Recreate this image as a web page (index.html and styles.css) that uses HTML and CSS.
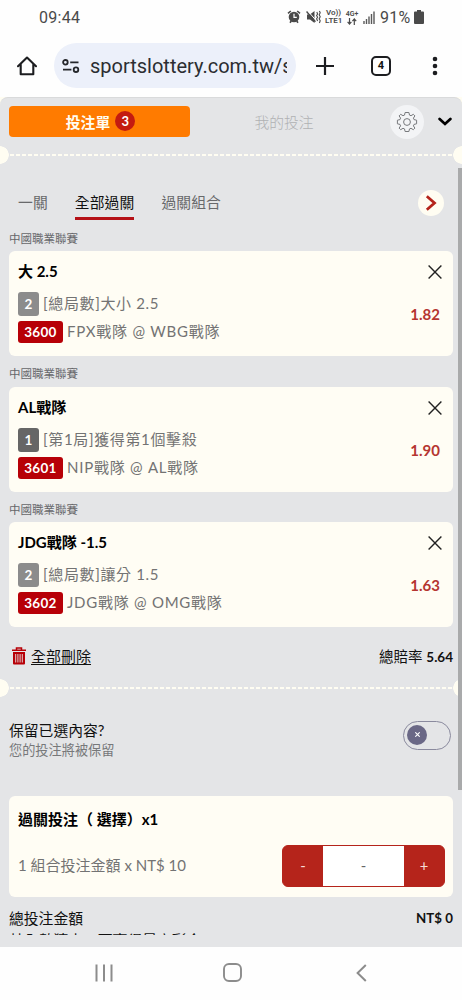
FILE: index.html
```html
<!DOCTYPE html>
<html lang="zh-Hant">
<head>
  <meta charset="UTF-8" />
  <meta name="viewport" content="width=device-width, initial-scale=1.0" />
  <title>投注單</title>
  <link rel="stylesheet" href="styles.css">
</head>
<body>
  <div class="phone">
    <!-- Status bar -->
    <div class="status">
      <span class="clock">09:44</span>
      <div class="status-icons">
        <svg class="alarm" width="14" height="14" viewBox="0 0 14 14">
          <path d="M1 3.4 3.8 1M13 3.4 10.2 1M3 12.8 4.3 11M11 12.8 9.7 11" stroke="#4a4a4a" stroke-width="1.6" fill="none"/>
          <circle cx="7" cy="7" r="5.3" fill="#4a4a4a"/>
          <path d="M7 3.8V7.3H9.8" stroke="#fff" stroke-width="1.2" fill="none"/>
        </svg>
        <svg class="mute" width="15" height="14" viewBox="0 0 15 14">
          <path d="M1 4.5H4L8.5 1V13L4 9.5H1Z" fill="#4a4a4a"/>
          <path d="M.6 1.6 9.4 11.8" stroke="#4a4a4a" stroke-width="1.5"/>
          <path d="M2.2 1.4 9.6 9.9" stroke="#fff" stroke-width="1"/>
          <path d="M10.8 2 11.6 4 10.6 5.6 11.6 7.2 10.6 8.8 11.6 11M13.4 1 14.2 2.8 13.2 4.8 14.2 6.8 13.2 8.8 14.2 10.8 13.4 13" stroke="#4a4a4a" stroke-width="1.1" fill="none"/>
        </svg>
        <span class="net volte">Vo))<br>LTE1</span>
        <span class="net lte">4G+<br><svg width="10" height="7" viewBox="0 0 10 7"><path d="M2.5 0V5.8M.6 3.8 2.5 6 4.4 3.8M7.3 7V1M5.4 3.1 7.3 1 9.2 3.1" stroke="#4a4a4a" stroke-width="1.2" fill="none"/></svg></span>
        <svg class="signal" width="12" height="13" viewBox="0 0 12 13">
          <path d="M1 10V13M3.5 8V13M6 5.5V13M8.5 3V13M11 .5V13" stroke="#5a5a5a" stroke-width="1.4"/>
        </svg>
        <span class="percent">91%</span>
        <svg class="battery" width="10" height="14" viewBox="0 0 10 14">
          <path d="M3 0H7V1.5H9Q10 1.5 10 2.5V13Q10 14 9 14H1Q0 14 0 13V2.5Q0 1.5 1 1.5H3Z" fill="#4a4a4a"/>
        </svg>
      </div>
    </div>

    <!-- Browser toolbar -->
    <div class="toolbar">
      <svg class="home" width="20" height="20" viewBox="0 0 20 20">
        <path d="M1 10.2 10 1.6 19 10.2M3.7 8.3V18.3H16.3V8.3" fill="none" stroke="#1c1d20" stroke-width="2.1" stroke-linejoin="round" stroke-linecap="round"/>
      </svg>
      <div class="url-bar">
        <svg width="18" height="14" viewBox="0 0 18 14">
          <g fill="none" stroke="#25272b" stroke-width="1.8">
            <circle cx="3.4" cy="3.3" r="2.3"/>
            <path d="M8.2 3.3H16.5M1 10.7H9.4"/>
            <circle cx="14" cy="10.7" r="2.3"/>
          </g>
        </svg>
        <span class="url">sportslottery.com.tw/s</span>
      </div>
      <svg class="plus" width="18" height="18" viewBox="0 0 18 18">
        <path d="M9 0V18M0 9H18" stroke="#1c1d20" stroke-width="2.2"/>
      </svg>
      <span class="tab-count">4</span>
      <svg class="dots" width="6" height="20" viewBox="0 0 6 20">
        <circle cx="3" cy="3" r="2.3"/><circle cx="3" cy="10" r="2.3"/><circle cx="3" cy="17" r="2.3"/>
      </svg>
    </div>

    <!-- Bet slip -->
    <div class="sheet-wrap">
      <div class="sheet">
        <div class="sheet-head">
          <div class="slip-tab">投注單<span class="badge">3</span></div>
          <div class="my-bets">我的投注</div>
          <div class="gear">
            <svg width="22" height="22" viewBox="-11 -11 22 22">
              <path d="M-1.9-9.5H1.9L2.5-6.9 4-6.3 6.3-7.7 7.9-6.1 6.4-3.9 7-2.4 9.6-1.8V1.8L7 2.4 6.4 3.9 7.9 6.1 6.3 7.7 4 6.3 2.5 6.9 1.9 9.5H-1.9L-2.5 6.9-4 6.3-6.3 7.7-7.9 6.1-6.4 3.9-7 2.4-9.6 1.8V-1.8L-7-2.4-6.4-3.9-7.9-6.1-6.3-7.7-4-6.3-2.5-6.9Z" fill="none" stroke="#77797c" stroke-linejoin="round"/>
              <circle r="3.4" fill="none" stroke="#77797c"/>
            </svg>
          </div>
          <svg class="chevron" width="14" height="10" viewBox="0 0 14 10">
            <path d="M1.6 2 7 7 12.4 2" fill="none" stroke="#000" stroke-width="2.7" stroke-linecap="round"/>
          </svg>
        </div>

        <div class="tear"></div>

        <div class="type-tabs">
          <span class="type">一關</span>
          <span class="type active">全部過關</span>
          <span class="type">過關組合</span>
          <div class="next">
            <svg width="12" height="16" viewBox="0 0 12 16">
              <path d="M1.8 1.3 9.5 8 1.8 14.7" fill="none" stroke="#b5241b" stroke-width="2.8"/>
            </svg>
          </div>
        </div>

        <div class="league">中國職業聯賽</div>
        <div class="bet">
          <div class="bet-info">
            <div class="pick">大 2.5</div>
            <div class="line"><span class="num">2</span><span>[總局數]大小 2.5</span></div>
            <div class="line teams"><span class="code">3600</span><span>FPX戰隊 @ WBG戰隊</span></div>
          </div>
          <div class="bet-side">
            <svg width="14" height="14" viewBox="0 0 14 14"><path d="M.6.6 13.4 13.4M13.4.6.6 13.4" stroke="#222" stroke-width="1.4"/></svg>
            <span class="odds">1.82</span>
          </div>
        </div>

        <div class="league">中國職業聯賽</div>
        <div class="bet">
          <div class="bet-info">
            <div class="pick">AL戰隊</div>
            <div class="line"><span class="num dark">1</span><span>[第1局]獲得第1個擊殺</span></div>
            <div class="line teams"><span class="code">3601</span><span>NIP戰隊 @ AL戰隊</span></div>
          </div>
          <div class="bet-side">
            <svg width="14" height="14" viewBox="0 0 14 14"><path d="M.6.6 13.4 13.4M13.4.6.6 13.4" stroke="#222" stroke-width="1.4"/></svg>
            <span class="odds">1.90</span>
          </div>
        </div>

        <div class="league">中國職業聯賽</div>
        <div class="bet">
          <div class="bet-info">
            <div class="pick">JDG戰隊 -1.5</div>
            <div class="line"><span class="num">2</span><span>[總局數]讓分 1.5</span></div>
            <div class="line teams"><span class="code">3602</span><span>JDG戰隊 @ OMG戰隊</span></div>
          </div>
          <div class="bet-side">
            <svg width="14" height="14" viewBox="0 0 14 14"><path d="M.6.6 13.4 13.4M13.4.6.6 13.4" stroke="#222" stroke-width="1.4"/></svg>
            <span class="odds">1.63</span>
          </div>
        </div>

        <div class="summary">
          <svg width="14" height="18" viewBox="0 0 14 18">
            <path d="M0 3.3H14M4.5 3V1H9.5V3" fill="none" stroke="#b70007" stroke-width="1.5"/>
            <path d="M1 5H13V16.5Q13 17.5 12 17.5H2Q1 17.5 1 16.5Z" fill="#b70007"/>
            <path d="M3.7 7V15.5M5.9 7V15.5M8.1 7V15.5M10.3 7V15.5" stroke="#e4e5e7" stroke-width=".9"/>
          </svg>
          <span class="clear">全部刪除</span>
          <span class="total-odds">總賠率 <b>5.64</b></span>
        </div>

        <div class="tear"></div>

        <div class="keep">
          <div>
            <div class="keep-title">保留已選內容?</div>
            <div class="keep-note">您的投注將被保留</div>
          </div>
          <div class="toggle">
            <span class="knob"><svg width="5" height="5" viewBox="0 0 5 5"><path d="M.3.3 4.7 4.7M4.7.3.3 4.7" stroke="#fff" stroke-width="1.1"/></svg></span>
          </div>
        </div>

        <div class="stake">
          <div class="stake-title">過關投注（ 選擇）x1</div>
          <div class="stake-row">
            <span class="stake-label">1 組合投注金額 x NT$ 10</span>
            <div class="stepper">
              <span class="step">-</span>
              <span class="amount">-</span>
              <span class="step">+</span>
            </div>
          </div>
        </div>

        <div class="total"><span>總投注金額</span><b>NT$ 0</b></div>
        <div class="cut">若全數猜中，可贏得最高彩金</div>

        <div class="scrollbar"></div>
      </div>
    </div>

    <!-- Android navigation -->
    <div class="nav">
      <svg width="18" height="18" viewBox="0 0 18 18"><path d="M1.5.5V17.5M9 .5V17.5M16.5.5V17.5" stroke="#8c8c8c" stroke-width="2"/></svg>
      <svg class="nav-home" width="19" height="19" viewBox="0 0 19 19"><rect x="1" y="1" width="17" height="17" rx="5" fill="none" stroke="#8c8c8c" stroke-width="1.9"/></svg>
      <svg width="11" height="18" viewBox="0 0 11 18"><path d="M9.8 1 1.6 9 9.8 17" fill="none" stroke="#8c8c8c" stroke-width="2"/></svg>
    </div>
  </div>
</body>
</html>
```
FILE: styles.css
```css
* {
  box-sizing: border-box;
}

body {
  margin: 0;
  background: #fefefe;
  color: #111;
  font-family: Lato, "Noto Sans CJK TC", sans-serif;
  font-size: 14.8px;
}

svg {
  display: block;
  flex: none;
}

.phone {
  width: 462px;
  height: 1000px;
  display: flex;
  flex-direction: column;
  overflow: hidden;
}

/* status bar */
.status {
  height: 34px;
  padding: 0 38px 0 39px;
  display: flex;
  align-items: center;
  justify-content: space-between;
  font-family: Roboto, sans-serif;
  color: #4a4a4a;
}

.clock {
  font-size: 16px;
  letter-spacing: 0.3px;
}

.status-icons {
  display: flex;
  align-items: center;
}

.mute {
  margin-left: 5px;
}

.net {
  font-size: 8px;
  line-height: 8px;
  font-weight: 600;
  text-align: center;
}

.net svg {
  margin: 0 auto;
}

.volte {
  width: 17px;
  margin-left: 4px;
}

.lte {
  width: 14px;
  margin-left: 3px;
  font-size: 7px;
}

.signal {
  margin-left: 4px;
}

.percent {
  margin-left: 5px;
  width: 34px;
  font-size: 16px;
  letter-spacing: 0.2px;
  white-space: nowrap;
}

/* browser toolbar */
.toolbar {
  height: 63px;
  padding: 0 24px 0 17px;
  display: flex;
  align-items: center;
}

.url-bar {
  width: 242px;
  height: 45px;
  margin-left: 17px;
  padding: 0 8px;
  display: flex;
  align-items: center;
  gap: 10px;
  border-radius: 23px;
  background: #ecf0fa;
}

.url {
  width: 197px;
  overflow: hidden;
  white-space: nowrap;
  font: 20px/28px Roboto, sans-serif;
  color: #2b2d31;
}

.plus {
  margin-left: 20px;
}

.tab-count {
  width: 20px;
  height: 20px;
  margin-left: 37px;
  border: 2px solid #1c1d20;
  border-radius: 5px;
  font: bold 11px/16px Roboto, sans-serif;
  text-align: center;
}

.dots {
  margin-left: auto;
  fill: #1c1d20;
}

/* bet slip */
.sheet-wrap {
  height: 850px;
  background: #fffdf2;
}

.sheet {
  position: relative;
  height: 850px;
  padding: 8px 9px 0;
  border-radius: 8px 8px 0 0;
  border-top: 1px solid #d9dadb;
  background: #e4e5e7;
  overflow: hidden;
}

.sheet-head {
  height: 31px;
  display: flex;
  align-items: center;
}

.slip-tab {
  width: 181px;
  height: 31px;
  padding: 0 0 1px 2px;
  display: flex;
  align-items: center;
  justify-content: center;
  gap: 5px;
  border-radius: 4px;
  background: #ff7b00;
  color: #fffdf2;
  font-weight: bold;
}

.badge {
  width: 20px;
  height: 20px;
  border-radius: 50%;
  background: #c41b10;
  color: #fff;
  font-size: 13px;
  line-height: 20px;
  text-align: center;
}

.my-bets {
  width: 188px;
  text-align: center;
  color: #b0b1b3;
  font-weight: 300;
}

.gear {
  width: 34px;
  height: 34px;
  margin-left: 12px;
  border-radius: 50%;
  background: #f3f4f6;
  display: grid;
  place-items: center;
}

.chevron {
  margin-left: 14px;
}

.tear {
  height: 18px;
  margin: 9px -9px 0;
  background:
    radial-gradient(circle at 0 50%, #fffdf2 8.5px, transparent 9px),
    radial-gradient(circle at 100% 50%, #fffdf2 8.5px, transparent 9px),
    repeating-linear-gradient(90deg, #fffdf2 0 4px, transparent 4px 6px) 10px 8px / 442px 2px no-repeat;
}

.type-tabs {
  height: 56px;
  margin-top: 10px;
  padding-left: 9px;
  display: flex;
  align-items: center;
}

.type {
  margin-right: 27px;
  height: 36px;
  line-height: 36px;
  letter-spacing: 0.1px;
  color: #68696b;
  border-bottom: 3px solid transparent;
}

.type.active {
  color: #111;
  border-color: #b51117;
}

.next {
  width: 26px;
  height: 26px;
  margin: 1px 9px 0 auto;
  border-radius: 50%;
  background: #fffdf2;
  display: grid;
  place-items: center;
}

.league {
  height: 30.5px;
  padding-top: 8px;
  line-height: 20px;
  font-size: 11.5px;
  color: #66676a;
}

.type-tabs + .league {
  height: 21px;
  padding-top: 0;
  line-height: 18px;
}

.bet {
  height: 105px;
  display: flex;
  justify-content: space-between;
  padding: 10px 11px 0 9px;
  border-radius: 6px;
  background: #fffdf4;
}

.pick,
.stake-title {
  line-height: 20px;
  font-size: 15px;
  font-weight: bold;
  color: #000;
}

.line {
  display: flex;
  align-items: center;
  height: 24px;
  margin-top: 11px;
  font-size: 15px;
  line-height: 20px;
  letter-spacing: 0.65px;
  color: #737373;
  white-space: pre;
}

.line span:last-child {
  padding-bottom: 2px;
}

.teams {
  margin-top: 4px;
  letter-spacing: 0.75px;
}

.num,
.code {
  height: 24px;
  margin-right: 4px;
  border-radius: 3px;
  background: #8c8c8c;
  color: #fff;
  font-size: 13.5px;
  font-weight: bold;
  line-height: 24px;
  text-align: center;
  letter-spacing: 0.3px;
}

.num {
  width: 21px;
}

.num.dark {
  background: #666;
}

.code {
  width: 45px;
  height: 22px;
  line-height: 22px;
  background: #b70007;
}

.bet-side {
  display: flex;
  flex-direction: column;
  align-items: flex-end;
  padding-top: 4px;
}

.odds {
  margin: 24px 2px 0 0;
  line-height: 22px;
  font-size: 15px;
  font-weight: bold;
  color: #b53530;
}

.summary {
  height: 43.5px;
  margin-top: 8px;
  padding: 0 0 2px 3px;
  display: flex;
  align-items: center;
}

.clear {
  margin-left: 5px;
  font-size: 15px;
  text-decoration: underline;
  text-underline-offset: 2px;
}

.total-odds {
  margin-left: auto;
  font-size: 14.5px;
}

.total-odds b {
  font-size: 13.5px;
}

.summary + .tear {
  margin-top: 0;
}

.keep {
  height: 99px;
  padding: 21px 2px 0 0;
  display: flex;
  justify-content: space-between;
}

.keep-title {
  line-height: 24px;
}

.keep-note {
  line-height: 17px;
  font-size: 13.2px;
  color: #77787a;
}

.toggle {
  width: 48px;
  height: 29px;
  margin: 3px 0 0;
  padding: 3px;
  border: 1px solid #8a8a9e;
  border-radius: 15px;
}

.knob {
  width: 20px;
  height: 20px;
  display: grid;
  place-items: center;
  border-radius: 50%;
  background: #6a6886;
}

.stake {
  height: 101px;
  padding: 13px 8px 0 9px;
  border-radius: 6px;
  background: #fffdf4;
}

.stake-row {
  display: flex;
  align-items: center;
  justify-content: space-between;
  margin-top: 16px;
}

.stake-label {
  padding-bottom: 2px;
  font-size: 15px;
  color: #737373;
}

.stepper {
  width: 163px;
  height: 42px;
  display: flex;
  border: 1px solid #b5241b;
  border-radius: 6px;
  background: #b5241b;
  overflow: hidden;
  line-height: 39px;
  text-align: center;
}

.step {
  width: 40px;
  color: #f6dcd5;
}

.amount {
  flex: 1;
  background: #fff;
  color: #666;
}

.total {
  display: flex;
  align-items: center;
  justify-content: space-between;
  height: 22px;
  margin-top: 10px;
}

.total b {
  padding-top: 1px;
  font-size: 13.3px;
}

/* next row, only its top edge is scrolled into view */
.cut {
  height: 6px;
  line-height: 22px;
  overflow: hidden;
  white-space: nowrap;
}

.scrollbar {
  position: absolute;
  top: 70px;
  right: 0;
  width: 4px;
  height: 622px;
  background: #a9aaab;
}

/* android navigation */
.nav {
  height: 53px;
  padding: 0 95px 2px;
  display: flex;
  align-items: center;
  justify-content: space-between;
}

.nav-home {
  margin-right: 4px;
}
```
